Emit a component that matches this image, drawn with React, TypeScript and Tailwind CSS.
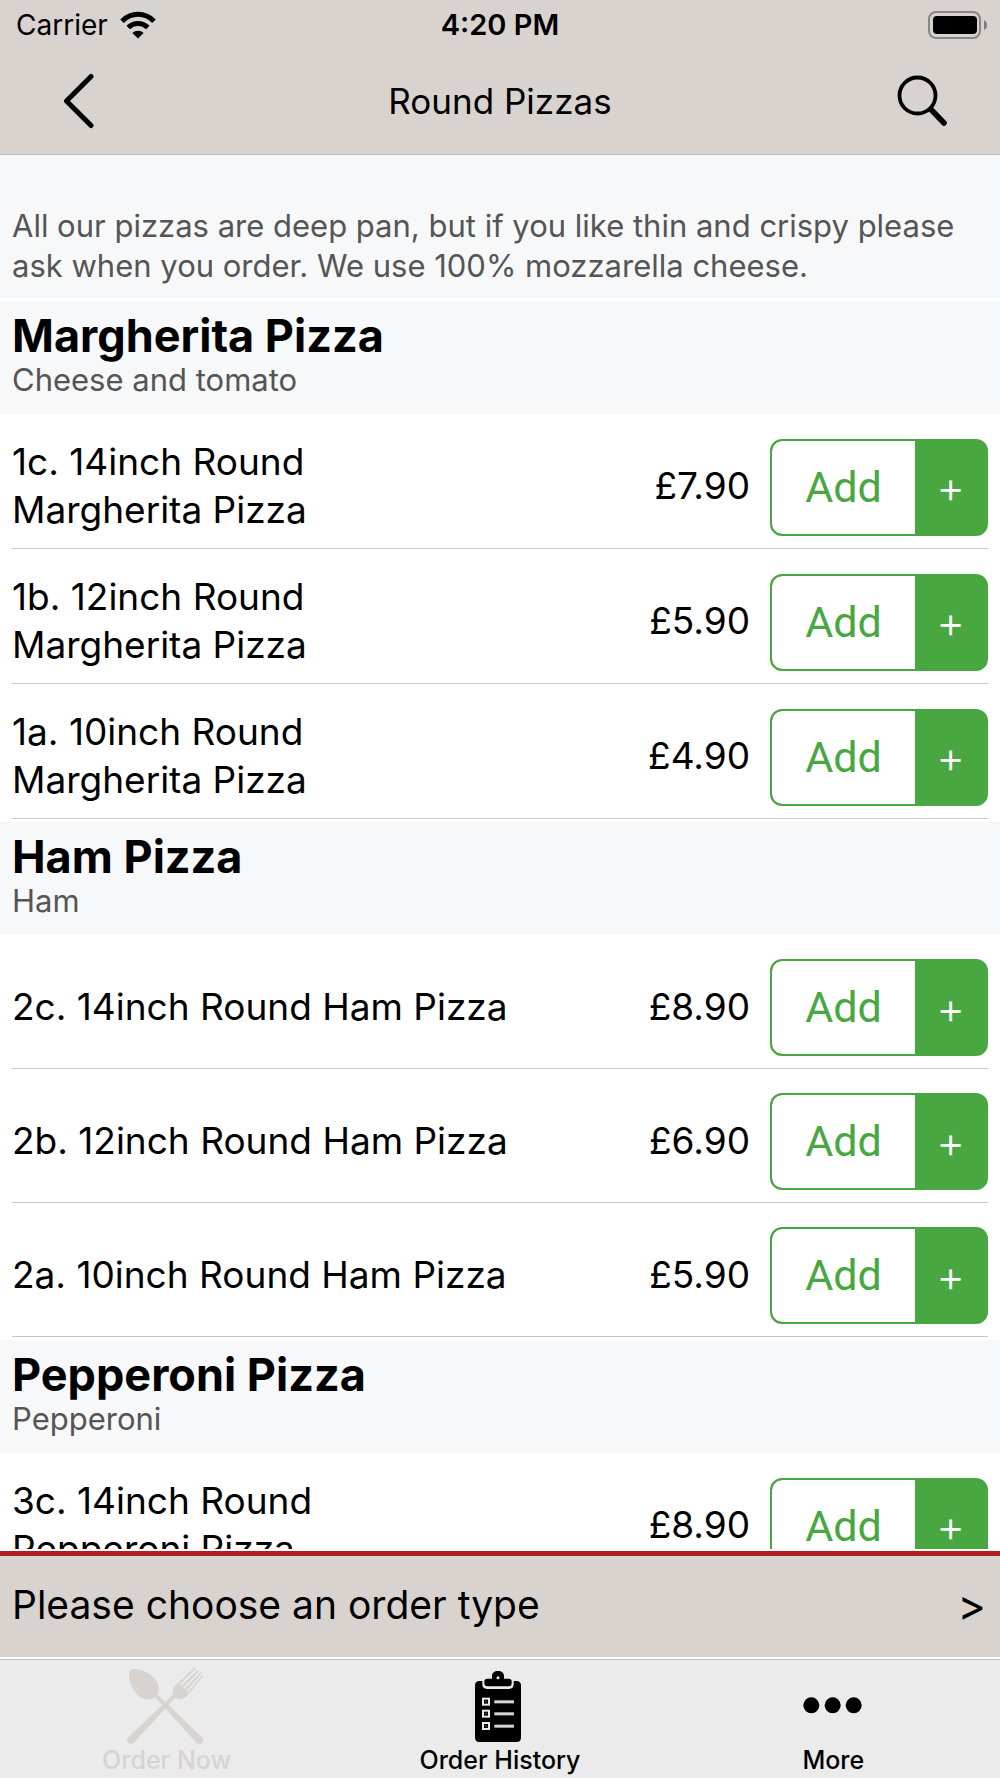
type Item = { name: string; price: string };
type Section = { title: string; note: string; items: Item[] };

const sections: Section[] = [
  {
    title: "Margherita Pizza",
    note: "Cheese and tomato",
    items: [
      { name: "1c. 14inch Round Margherita Pizza", price: "£7.90" },
      { name: "1b. 12inch Round Margherita Pizza", price: "£5.90" },
      { name: "1a. 10inch Round Margherita Pizza", price: "£4.90" },
    ],
  },
  {
    title: "Ham Pizza",
    note: "Ham",
    items: [
      { name: "2c. 14inch Round Ham Pizza", price: "£8.90" },
      { name: "2b. 12inch Round Ham Pizza", price: "£6.90" },
      { name: "2a. 10inch Round Ham Pizza", price: "£5.90" },
    ],
  },
  {
    title: "Pepperoni Pizza",
    note: "Pepperoni",
    items: [{ name: "3c. 14inch Round Pepperoni Pizza", price: "£8.90" }],
  },
];

function WifiIcon() {
  return (
    <svg width="36" height="28" viewBox="0 0 36 28" fill="none" stroke="#000" strokeWidth="5" aria-hidden="true">
      <path d="M2 10.2C11 1 25 1 34 10.2" />
      <path d="M8.2 16.6C13.8 11 22.2 11 27.8 16.6" />
      <path d="M18 27.5L12.4 21.9C15.6 19 20.4 19 23.6 21.9Z" fill="#000" stroke="none" />
    </svg>
  );
}

function BatteryIcon() {
  return (
    <svg width="60" height="28" viewBox="0 0 60 28" aria-hidden="true">
      <rect x="1" y="1" width="51" height="26" rx="7" fill="none" stroke="#8a8684" strokeWidth="2" />
      <rect x="5" y="5" width="44" height="18" rx="4" fill="#000" />
      <path d="M56 9C60 11 60 17 56 19Z" fill="#7d7977" />
    </svg>
  );
}

function BackIcon() {
  return (
    <svg width="32" height="56" viewBox="0 0 32 56" fill="none" stroke="#000" strokeWidth="5" strokeLinecap="round" strokeLinejoin="round" aria-hidden="true">
      <path d="M29 3.5L4.5 28L29 52.5" />
    </svg>
  );
}

function SearchIcon() {
  return (
    <svg width="52" height="52" viewBox="0 0 52 52" fill="none" stroke="#000" strokeLinecap="round" aria-hidden="true">
      <circle cx="21.5" cy="20.5" r="18" strokeWidth="3.8" />
      <path d="M35.5 35L48 48" strokeWidth="5.6" />
    </svg>
  );
}

function CutleryIcon() {
  return (
    <svg width="80" height="80" viewBox="141 42 240 240" fill="#d9d3d0" aria-hidden="true">
      <path d="M147 72C147 61 153 57 164 57C200 57 236 88 237 115C237 137 223 149 201 148C170 146 147 105 147 72Z" />
      <path d="M222 138L230 131L366 262C371 268 371 275 366 279C361 283 354 283 349 278Z" />
      <path d="M290 138L282 131L145 262C140 268 140 275 145 279C150 283 157 283 162 278Z" />
      <path d="M343 53L347 56L299 104L303 108L353 61L356 64L309 113L313 117L362 67L365 70L319 123L323 127L367 75L370 78L327 131C319 142 307 148 296 147C283 146 277 138 278 125C278 115 284 107 293 100Z" />
    </svg>
  );
}

function ClipboardIcon() {
  return (
    <svg width="80" height="80" viewBox="180 42 240 240" aria-hidden="true">
      <path d="M238 93H247V103C247 112 252 117 261 117H327C336 117 341 112 341 103V93H350C358 93 363 98 363 106V263C363 271 358 276 350 276H238C230 276 225 271 225 263V106C225 98 230 93 238 93Z" fill="#000" />
      <path d="M262 86H276V78C276 69 283 63 294 63C305 63 312 69 312 78V86H326C332 86 335 89 335 94V100C335 106 332 109 326 109H262C256 109 253 106 253 100V94C253 89 256 86 262 86Z" fill="#000" />
      <circle cx="294" cy="83" r="4.5" fill="#ebebeb" />
      {[155, 191, 228].map((y) => (
        <g key={y}>
          <rect x="246" y={y - 12} width="24" height="24" fill="#ebebeb" />
          <rect x="252" y={y - 6} width="12" height="12" fill="#000" />
          <rect x="256" y={y - 2} width="4" height="4" fill="#777" />
          <rect x="283" y={y - 4} width="59" height="9" fill="#d4d4d4" />
        </g>
      ))}
    </svg>
  );
}

function MoreIcon() {
  return (
    <svg width="80" height="80" viewBox="160 42 240 240" aria-hidden="true">
      <circle cx="215" cy="166" r="24" />
      <circle cx="279" cy="166" r="24" />
      <circle cx="342" cy="166" r="24" />
    </svg>
  );
}

function ItemRow({ name, price }: Item) {
  return (
    <li className="mx-3 flex items-center border-b border-[#c8c8c8] pt-6 pb-3">
      <span className="flex-1 pb-0.5 text-[37px] leading-[48px] text-balance">{name}</span>
      <span className="w-40 pb-0.5 text-right text-[37px] leading-[48px]">{price}</span>
      <div className="ml-5 flex h-[97px] w-[218px] overflow-hidden rounded-xl border-2 border-[#48a740] bg-[#48a740]">
        <button type="button" className="flex-1 rounded-l-[10px] bg-white font-[Roboto,sans-serif] text-[43px] text-[#48a740]" aria-label={`Add ${name}`}>
          Add
        </button>
        <button type="button" className="w-[71px] text-[44px] font-light text-white" aria-label={`Options for ${name}`}>
          +
        </button>
      </div>
    </li>
  );
}

export default function App() {
  return (
    <div className="flex h-screen flex-col bg-white font-[Inter,sans-serif] text-black">
      <header className="border-b border-[#c2bdba] bg-[#d9d3d0] pb-0.5">
        <div className="grid h-[50px] grid-cols-3 items-center px-3">
          <div className="flex items-center gap-3 pl-1 text-[28px]">
            Carrier
            <WifiIcon />
          </div>
          <div className="text-center text-[29px] font-semibold">4:20 PM</div>
          <div className="flex justify-end">
            <BatteryIcon />
          </div>
        </div>
        <div className="flex h-[102px] items-center justify-between px-[52px]">
          <button type="button" aria-label="Back" className="px-2.5">
            <BackIcon />
          </button>
          <h1 className="text-[35px]">Round Pizzas</h1>
          <button type="button" aria-label="Search">
            <SearchIcon />
          </button>
        </div>
      </header>

      <main className="min-h-0 flex-1 overflow-hidden">
        <p className="bg-[#f7f8fa] px-3 pt-[51px] pb-3 text-[31px] leading-10 text-[#555]">
          All our pizzas are deep pan, but if you like thin and crispy please ask when you order. We use 100% mozzarella cheese.
        </p>
        {sections.map((section) => (
          <section key={section.title}>
            <div className="mt-[3px] bg-[#f7f8fa] px-3 pt-2.5 pb-[15px]">
              <h2 className="text-[45px] leading-[50px] font-bold">{section.title}</h2>
              <p className="text-[31px] leading-[38px] text-[#555]">{section.note}</p>
            </div>
            <ul>
              {section.items.map((item) => (
                <ItemRow key={item.name} {...item} />
              ))}
            </ul>
          </section>
        ))}
      </main>

      <button type="button" className="mt-0.5 flex items-center justify-between border-t-[5px] border-[#ae1e23] bg-[#d9d3d0] px-3 pt-[25px] pb-7 text-left text-[39px] leading-[48px]">
        <span>Please choose an order type</span>
        <span className="pr-0.5 text-[43px]">&gt;</span>
      </button>

      <nav className="mt-0.5 grid grid-cols-3 border-t border-[#bdbdbd] bg-[#ebebeb] pt-1 pb-0.5 text-[25px] leading-8 font-medium">
        <a href="#order" className="flex flex-col items-center text-[#d9d3d0]">
          <CutleryIcon />
          Order Now
        </a>
        <a href="#history" className="flex flex-col items-center">
          <ClipboardIcon />
          Order History
        </a>
        <a href="#more" className="flex flex-col items-center">
          <MoreIcon />
          More
        </a>
      </nav>
    </div>
  );
}
